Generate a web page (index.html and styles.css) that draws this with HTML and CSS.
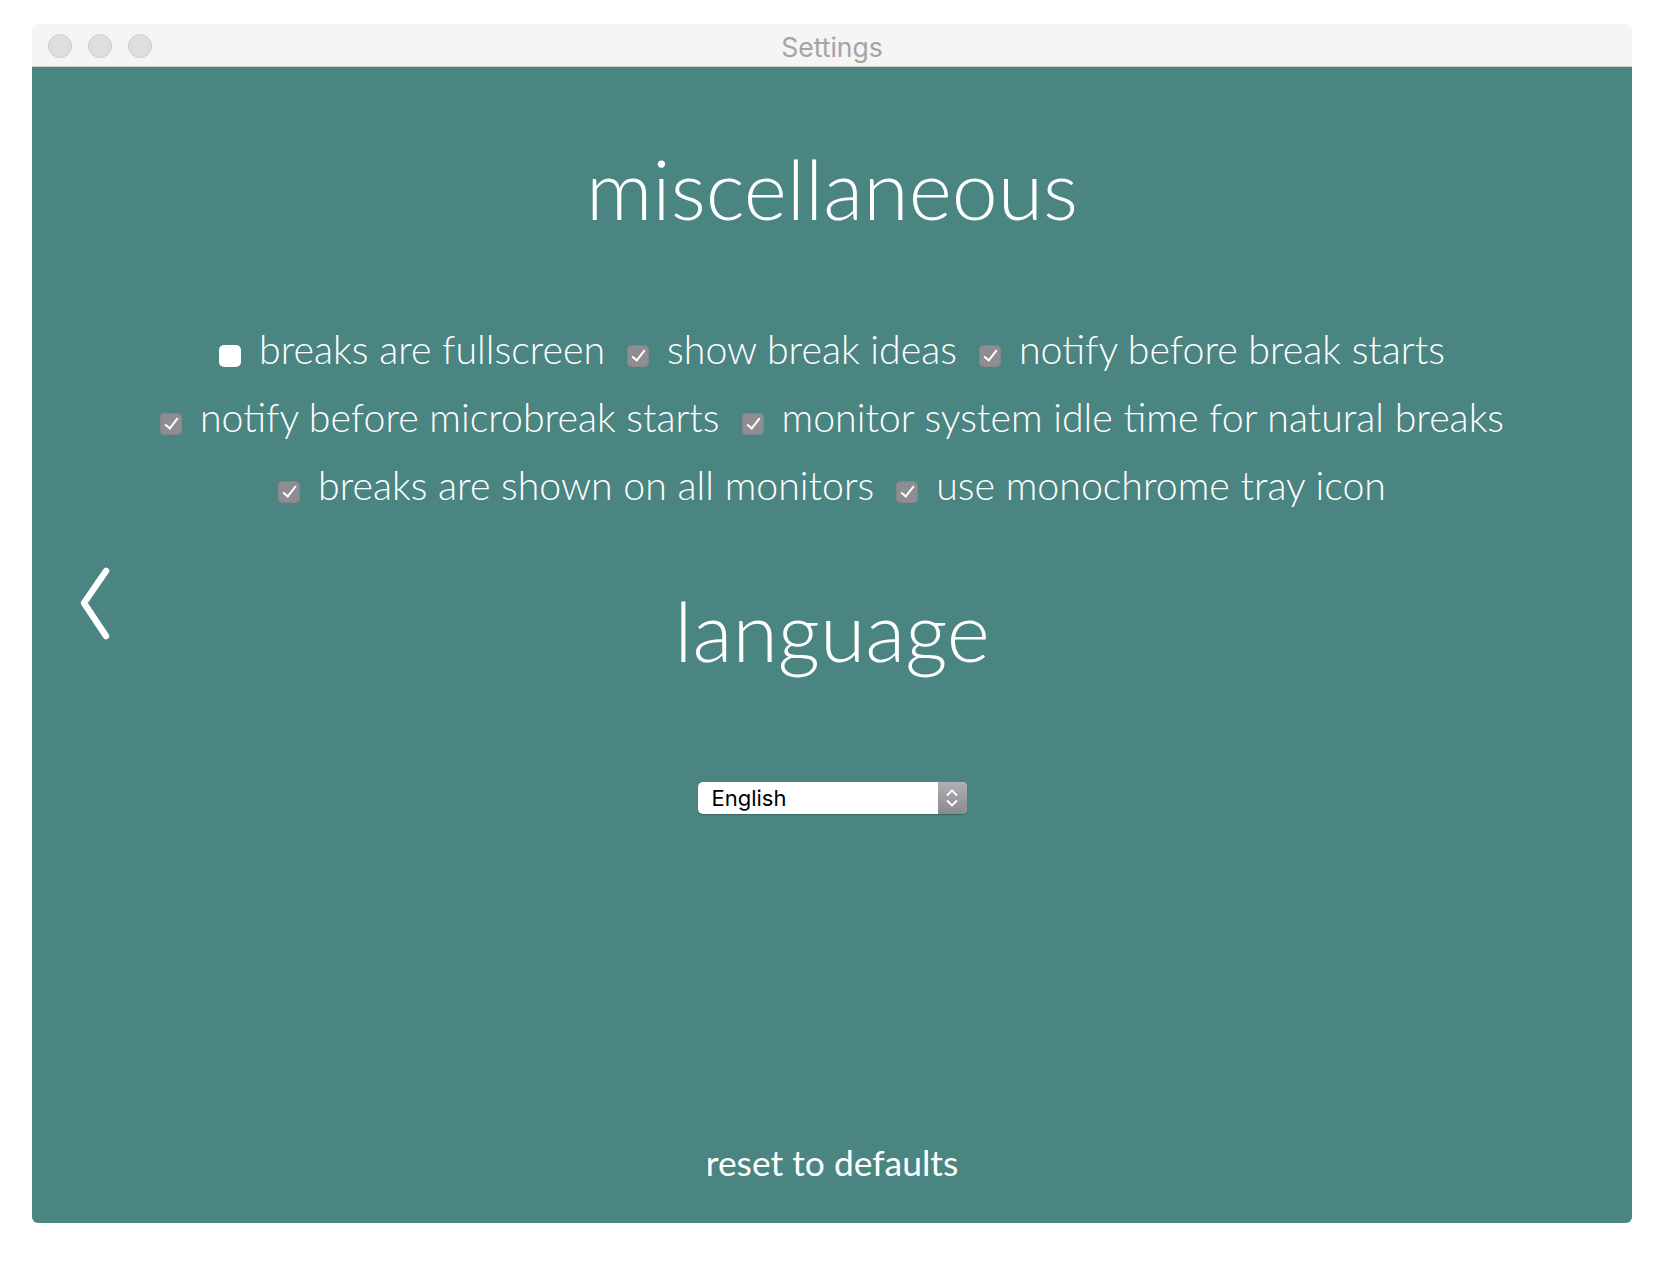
FILE: index.html
```html
<!DOCTYPE html>
<html lang="en">
<head>
<meta charset="utf-8">
<title>Settings</title>
<link rel="stylesheet" href="styles.css">
</head>
<body>
<div class="window">
  <div class="titlebar">
    <div class="lights">
      <span class="light"></span>
      <span class="light"></span>
      <span class="light"></span>
    </div>
    <div class="title">Settings</div>
  </div>
  <div class="content">
    <svg class="back" width="40" height="80" viewBox="0 0 40 80" aria-hidden="true">
      <polyline points="31,8 9,40 31,73" fill="none" stroke="#fff" stroke-width="6.5" stroke-linecap="round" stroke-linejoin="round"/>
    </svg>
    <h1 class="heading heading-misc">miscellaneous</h1>
    <div class="options">
      <label class="option"><span class="box"></span><span class="label">breaks are fullscreen</span></label>
      <label class="option"><span class="box checked"></span><span class="label">show break ideas</span></label>
      <label class="option"><span class="box checked"></span><span class="label">notify before break starts</span></label>
      <label class="option"><span class="box checked"></span><span class="label">notify before microbreak starts</span></label>
      <label class="option"><span class="box checked"></span><span class="label">monitor system idle time for natural breaks</span></label>
      <label class="option"><span class="box checked"></span><span class="label">breaks are shown on all monitors</span></label>
      <label class="option"><span class="box checked"></span><span class="label">use monochrome tray icon</span></label>
    </div>
    <h1 class="heading heading-lang">language</h1>
    <div class="select">
      <span class="select-text">English</span>
      <span class="select-arrows">
        <svg width="14" height="22" viewBox="0 0 14 22" aria-hidden="true">
          <polyline points="2.5,8 7,3.5 11.5,8" fill="none" stroke="#fff" stroke-width="1.8" stroke-linecap="round" stroke-linejoin="round"/>
          <polyline points="2.5,14 7,18.5 11.5,14" fill="none" stroke="#fff" stroke-width="1.8" stroke-linecap="round" stroke-linejoin="round"/>
        </svg>
      </span>
    </div>
    <div class="reset">reset to defaults</div>
  </div>
</div>
</body>
</html>
```

FILE: styles.css
```css
html, body {
  margin: 0;
  padding: 0;
  background: #ffffff;
}

.window {
  margin: 24px 0 0 32px;
  width: 1600px;
  height: 1199px;
  border-radius: 6px;
  overflow: hidden;
  display: flex;
  flex-direction: column;
}

.titlebar {
  height: 42px;
  flex: none;
  background: #f5f5f5;
  border-bottom: 1px solid #cfcfcf;
  position: relative;
  display: flex;
  align-items: center;
  justify-content: center;
}

.lights {
  position: absolute;
  left: 16px;
  top: 10px;
  display: flex;
  gap: 16px;
}

.light {
  width: 22px;
  height: 22px;
  border-radius: 50%;
  background: #dedede;
  border: 1px solid #cdcdcd;
}

.title {
  font-family: Inter, "Liberation Sans", sans-serif;
  font-size: 26.5px;
  color: #a4a4a4;
  line-height: 42px;
  padding-top: 4px;
}

.content {
  flex: 1;
  background: #4a8581;
  position: relative;
  display: flex;
  flex-direction: column;
  align-items: center;
  color: #ffffff;
  font-family: "Lato Light", Lato, "Open Sans", sans-serif;
}

.back {
  position: absolute;
  left: 43px;
  top: 496px;
}

.heading {
  margin: 0;
  font-weight: 300;
  font-size: 82.5px;
  line-height: 100px;
}

.heading-misc {
  margin-top: 72px;
}

.options {
  margin-top: 76px;
  width: 1450px;
  display: flex;
  flex-wrap: wrap;
  justify-content: center;
  column-gap: 22px;
  font-size: 39.3px;
  font-weight: 300;
  line-height: 68px;
}

.option {
  white-space: nowrap;
}

.box {
  display: inline-block;
  width: 22px;
  height: 22px;
  border-radius: 5px;
  background: #ffffff;
  vertical-align: -3px;
  margin-right: 18px;
  position: relative;
}

.box.checked {
  background: #8e8e92;
  box-shadow: inset 0 0 0 1px #84848a;
}

.box.checked::after {
  content: "";
  position: absolute;
  left: 8px;
  top: 2px;
  width: 5px;
  height: 12px;
  border-right: 2.5px solid #ffffff;
  border-bottom: 2.5px solid #ffffff;
  transform: rotate(38deg);
}

.heading-lang {
  margin-top: 62px;
}

.select {
  margin-top: 101px;
  width: 269px;
  height: 32px;
  border-radius: 5px;
  background: #ffffff;
  box-shadow: 0 1px 1px rgba(0, 0, 0, 0.25);
  display: flex;
  align-items: center;
  overflow: hidden;
}

.select-text {
  flex: 1;
  padding-left: 14px;
  font-family: Inter, "Liberation Sans", sans-serif;
  font-size: 22px;
  color: #000000;
}

.select-arrows {
  width: 29px;
  height: 32px;
  background: linear-gradient(#b0b0b4, #8a8a8e);
  display: flex;
  align-items: center;
  justify-content: center;
}

.reset {
  margin-top: auto;
  margin-bottom: 38px;
  font-family: Lato, "Open Sans", sans-serif;
  font-size: 35.4px;
  font-weight: 400;
  line-height: 44px;
}
```
